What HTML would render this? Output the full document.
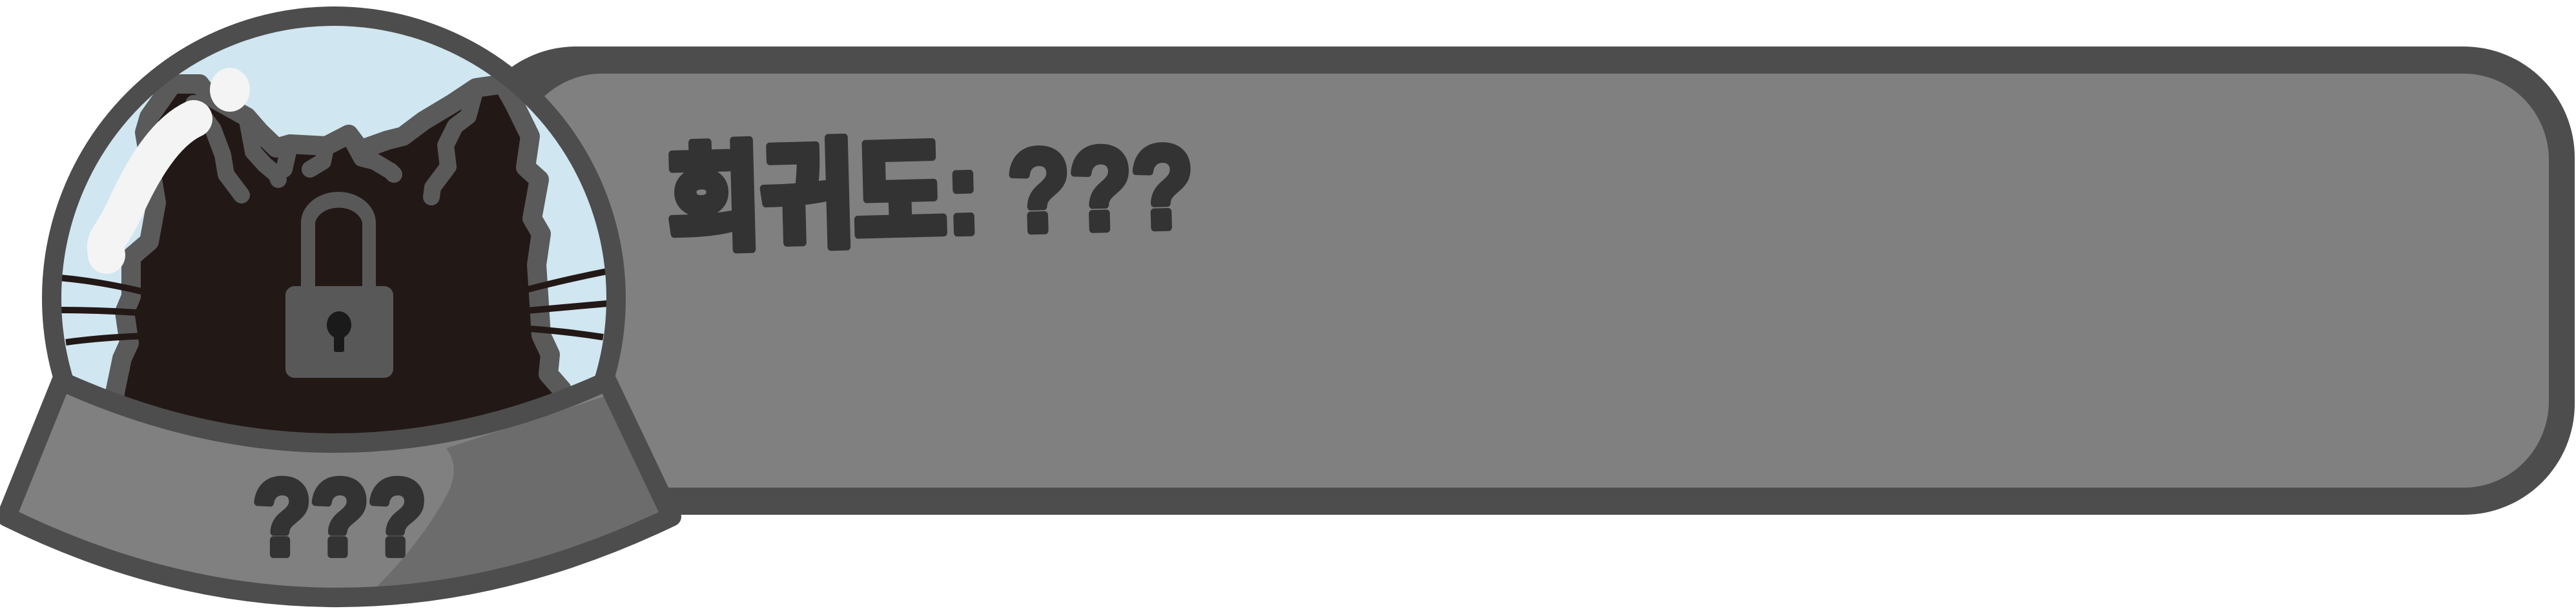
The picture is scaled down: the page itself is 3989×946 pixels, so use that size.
<!DOCTYPE html>
<html><head><meta charset="utf-8"><style>
html,body{margin:0;padding:0;background:#fff;}
svg{display:block}
</style></head><body>
<svg width="3989" height="946" viewBox="0 0 3989 946" xmlns="http://www.w3.org/2000/svg">
<defs>
<clipPath id="gc"><circle cx="517" cy="462" r="437"/></clipPath>
<clipPath id="bc"><path d="M95 590 L10 800 Q519 1050 1040 800 L940 590 Q519 782 95 590 Z"/></clipPath>
</defs>
<!-- banner -->
<rect x="720" y="72" width="3267" height="725" rx="172" ry="172" fill="#4d4d4d"/>
<rect x="800" y="114" width="3147" height="641" rx="132" ry="134" fill="#808080"/>
<text x="1035" y="372" font-family="'Liberation Sans','Noto Sans CJK KR',sans-serif" font-weight="900" font-size="180" fill="#333" stroke="#333" stroke-width="12" stroke-linejoin="round" transform="rotate(-1.5 1035 372)" textLength="815" lengthAdjust="spacingAndGlyphs">희귀도: ???</text>
<!-- globe -->
<circle cx="517" cy="462" r="437" fill="#d0e6f0"/>
<g clip-path="url(#gc)">
<path d="M267 130 L309 130 L323 148 L382 181 L403 205 L428 229 L449 223 L505 226 L540 208 L558 232 L600 217 L624 211 L656 187 L701 160 L737 136 L779 130 L796 160 L821 211 L814 259 L835 278 L824 338 L838 362 L831 410 L835 471 L838 519 L852 549 L849 579 L870 603 L880 700 L180 700 L175 627 L179 603 L189 555 L200 531 L193 483 L203 459 L203 398 L231 374 L242 314 L224 205 L231 181 Z" fill="#221816" stroke="#5a5a5a" stroke-width="30" stroke-linejoin="round"/>
<g fill="none" stroke="#5a5a5a" stroke-width="26" stroke-linecap="round" stroke-linejoin="round">
<polyline points="300,160 330,200 345,240 350,270 365,290 374,302"/>
<polyline points="382,181 392,235 410,255 428,270 431,278"/>
<polyline points="540,208 560,245 580,250 605,265 610,270"/>
<polyline points="737,136 725,180 705,195 690,225 694,258 670,290 668,305"/>
<polyline points="505,226 500,250 480,262"/>
<polyline points="449,223 440,262"/>
</g>
<g fill="none" stroke="#221816" stroke-width="10">
<path d="M92 430 Q160 436 235 455"/>
<path d="M92 480 Q160 480 226 485"/>
<path d="M102 530 Q160 522 228 520"/>
<path d="M810 450 Q870 434 940 420"/>
<path d="M805 482 Q870 476 940 470"/>
<path d="M805 508 Q870 512 934 522"/>
</g>
<path d="M300 184 C255 205 220 265 195 320 C170 375 160 365 165 395" fill="none" stroke="#f4f4f4" stroke-width="58" stroke-linecap="round"/>
<ellipse cx="356" cy="139" rx="31" ry="34" fill="#f4f4f4"/>
<!-- lock -->
<path d="M466 360 L466 345 A58 48 0 0 1 582 345 L582 444 L561 444 L561 345 A37 28 0 0 0 488 345 L488 444 L466 444 Z" fill="#585858"/>
<rect x="442" y="443" width="167" height="142" rx="14" fill="#585858"/>
<ellipse cx="525" cy="503" rx="19" ry="21" fill="#1a1a1a"/>
<rect x="517" y="505" width="16" height="40" rx="3" fill="#1a1a1a"/>
</g>
<circle cx="517" cy="462" r="437" fill="none" stroke="#4d4d4d" stroke-width="30"/>
<!-- base -->
<path d="M95 590 L10 800 Q519 1050 1040 800 L940 590 Q519 782 95 590 Z" fill="#808080"/>
<g clip-path="url(#bc)">
<path d="M691 694 Q715 725 690 770 Q640 860 545 945 L1100 945 L1100 560 Z" fill="#6c6c6c"/>
</g>
<path d="M95 590 L10 800 Q519 1050 1040 800 L940 590 Q519 782 95 590 Z" fill="none" stroke="#4d4d4d" stroke-width="30" stroke-linejoin="round"/>
<text x="392" y="858" font-family="'Liberation Sans',sans-serif" font-weight="bold" font-size="165" fill="#333" stroke="#333" stroke-width="12" stroke-linejoin="round" textLength="268" lengthAdjust="spacingAndGlyphs">???</text>
</svg>
</body></html>
